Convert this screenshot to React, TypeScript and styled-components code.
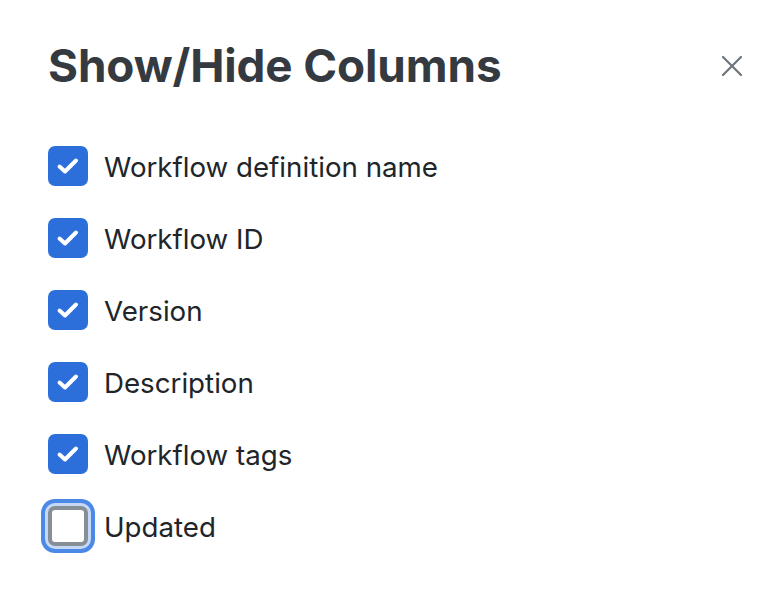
import React, { useState } from 'react';
import styled, { createGlobalStyle } from 'styled-components';

const GlobalStyle = createGlobalStyle`
  html, body {
    margin: 0;
    padding: 0;
    background: #ffffff;
    font-family: Inter, "Noto Sans", sans-serif;
  }
`;

interface Column {
  id: string;
  label: string;
  visible: boolean;
}

const initialColumns: Column[] = [
  { id: 'name', label: 'Workflow definition name', visible: true },
  { id: 'id', label: 'Workflow ID', visible: true },
  { id: 'version', label: 'Version', visible: true },
  { id: 'description', label: 'Description', visible: true },
  { id: 'tags', label: 'Workflow tags', visible: true },
  { id: 'updated', label: 'Updated', visible: false },
];

const Panel = styled.div`
  width: 776px;
  height: 602px;
  box-sizing: border-box;
  padding: 37px 28px 0 48px;
  display: flex;
  flex-direction: column;
`;

const Header = styled.div`
  display: flex;
  align-items: center;
  justify-content: space-between;
`;

const Title = styled.h2`
  margin: 0;
  font-size: 45.8px;
  font-weight: 700;
  line-height: 58px;
  color: #343a40;
  letter-spacing: -0.1px;
`;

const CloseButton = styled.button`
  width: 32px;
  height: 32px;
  border: none;
  background: none;
  padding: 0;
  display: flex;
  align-items: center;
  justify-content: center;
  color: #6c757d;
  cursor: pointer;
`;

const List = styled.div`
  margin-top: 51px;
  display: flex;
  flex-direction: column;
  gap: 32px;
`;

const Row = styled.label`
  height: 40px;
  display: flex;
  align-items: center;
  gap: 16px;
  cursor: pointer;
`;

const Box = styled.span<{ checked: boolean; focused: boolean }>`
  width: 40px;
  height: 40px;
  box-sizing: border-box;
  border-radius: 7px;
  flex-shrink: 0;
  display: flex;
  align-items: center;
  justify-content: center;
  background: ${({ checked }) => (checked ? '#2c6fdb' : '#ffffff')};
  border: ${({ checked }) => (checked ? 'none' : '4px solid #868e96')};
  box-shadow: ${({ focused }) =>
    focused ? '0 0 0 3px #c5d8f6, 0 0 0 7px #4a8ae6' : 'none'};
`;

const Label = styled.span`
  font-size: 27.7px;
  line-height: 40px;
  color: #212529;
  transform: translateY(1px);
`;

const App: React.FC = () => {
  const [columns, setColumns] = useState(initialColumns);

  const toggle = (id: string) => {
    setColumns((cols) =>
      cols.map((c) => (c.id === id ? { ...c, visible: !c.visible } : c))
    );
  };

  return (
    <>
      <GlobalStyle />
      <Panel>
        <Header>
          <Title>Show/Hide Columns</Title>
          <CloseButton aria-label="Close">
            <svg width="22" height="22" viewBox="0 0 22 22" fill="none">
              <path
                d="M2 2L20 20M20 2L2 20"
                stroke="currentColor"
                strokeWidth="2.2"
                strokeLinecap="round"
              />
            </svg>
          </CloseButton>
        </Header>
        <List>
          {columns.map((col) => (
            <Row key={col.id} onClick={() => toggle(col.id)}>
              <Box checked={col.visible} focused={col.id === 'updated'}>
                {col.visible && (
                  <svg width="26" height="26" viewBox="0 0 26 26" fill="none">
                    <path
                      d="M4.5 13.5L10 18.5L21 7.5"
                      stroke="#ffffff"
                      strokeWidth="4"
                      strokeLinecap="round"
                      strokeLinejoin="round"
                    />
                  </svg>
                )}
              </Box>
              <Label>{col.label}</Label>
            </Row>
          ))}
        </List>
      </Panel>
    </>
  );
};

export default App;
